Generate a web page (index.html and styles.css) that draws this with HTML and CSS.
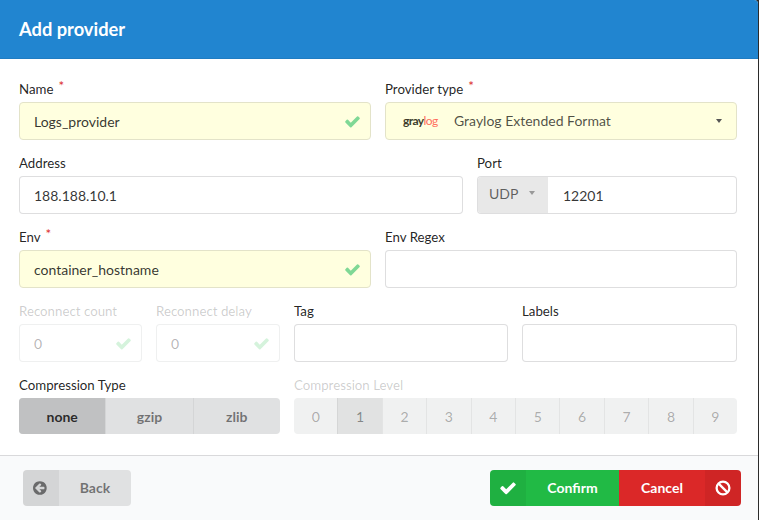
FILE: index.html
```html
<!DOCTYPE html>
<html lang="en">
<head>
  <meta charset="UTF-8" />
  <meta name="viewport" content="width=device-width, initial-scale=1.0"/>
  <title>Add provider</title>
  <link rel="stylesheet" href="styles.css">
</head>
<body>
  <div class="modal">
    <div class="modal-header">Add provider</div>

    <form class="modal-content">
      <div class="row">
        <div class="field half">
          <label class="required">Name</label>
          <div class="box valid">
            <span class="value">Logs_provider</span>
            <svg class="check" viewBox="0 0 1792 1792"><path d="M1671 566q0 40-28 68l-724 724-136 136q-28 28-68 28t-68-28l-136-136-362-362q-28-28-28-68t28-68l136-136q28-28 68-28t68 28l294 295 656-657q28-28 68-28t68 28l136 136q28 28 28 68z"/></svg>
          </div>
        </div>
        <div class="field half">
          <label class="required">Provider type</label>
          <div class="box valid select">
            <span class="logo">gray<em>log</em></span>
            <span class="value">Graylog Extended Format</span>
            <i class="caret"></i>
          </div>
        </div>
      </div>

      <div class="row">
        <div class="field address">
          <label>Address</label>
          <div class="box"><span class="value">188.188.10.1</span></div>
        </div>
        <div class="field port">
          <label>Port</label>
          <div class="box with-addon">
            <span class="addon">UDP<i class="caret light"></i></span>
            <span class="value">12201</span>
          </div>
        </div>
      </div>

      <div class="row">
        <div class="field half">
          <label class="required">Env</label>
          <div class="box valid">
            <span class="value">container_hostname</span>
            <svg class="check" viewBox="0 0 1792 1792"><path d="M1671 566q0 40-28 68l-724 724-136 136q-28 28-68 28t-68-28l-136-136-362-362q-28-28-28-68t28-68l136-136q28-28 68-28t68 28l294 295 656-657q28-28 68-28t68 28l136 136q28 28 28 68z"/></svg>
          </div>
        </div>
        <div class="field half">
          <label>Env Regex</label>
          <div class="box"></div>
        </div>
      </div>

      <div class="row">
        <div class="field reconnect-count disabled">
          <label>Reconnect count</label>
          <div class="box">
            <span class="value">0</span>
            <svg class="check" viewBox="0 0 1792 1792"><path d="M1671 566q0 40-28 68l-724 724-136 136q-28 28-68 28t-68-28l-136-136-362-362q-28-28-28-68t28-68l136-136q28-28 68-28t68 28l294 295 656-657q28-28 68-28t68 28l136 136q28 28 28 68z"/></svg>
          </div>
        </div>
        <div class="field reconnect-delay disabled">
          <label>Reconnect delay</label>
          <div class="box">
            <span class="value">0</span>
            <svg class="check" viewBox="0 0 1792 1792"><path d="M1671 566q0 40-28 68l-724 724-136 136q-28 28-68 28t-68-28l-136-136-362-362q-28-28-28-68t28-68l136-136q28-28 68-28t68 28l294 295 656-657q28-28 68-28t68 28l136 136q28 28 28 68z"/></svg>
          </div>
        </div>
        <div class="field tag">
          <label>Tag</label>
          <div class="box"></div>
        </div>
        <div class="field labels">
          <label>Labels</label>
          <div class="box"></div>
        </div>
      </div>

      <div class="row">
        <div class="field comp-type">
          <label>Compression Type</label>
          <div class="btn-group">
            <span class="active">none</span>
            <span>gzip</span>
            <span>zlib</span>
          </div>
        </div>
        <div class="field comp-level disabled">
          <label>Compression Level</label>
          <div class="btn-group">
            <span>0</span>
            <span class="active">1</span>
            <span>2</span>
            <span>3</span>
            <span>4</span>
            <span>5</span>
            <span>6</span>
            <span>7</span>
            <span>8</span>
            <span>9</span>
          </div>
        </div>
      </div>
    </form>

    <div class="modal-actions">
      <button type="button" class="btn back">
        <span class="btn-icon"><svg viewBox="0 0 1792 1792"><path d="M1280 960v-128q0-26-19-45t-45-19h-502l189-189q19-19 19-45t-19-45l-91-91q-18-18-45-18t-45 18l-362 362-91 91q-18 18-18 45t18 45l91 91 362 362q18 18 45 18t45-18l91-91q18-18 18-45t-18-45l-189-189h502q26 0 45-19t19-45zm256-64q0 209-103 385.5t-279.5 279.5-385.5 103-385.5-103-279.5-279.5-103-385.5 103-385.5 279.5-279.5 385.5-103 385.5 103 279.5 279.5 103 385.5z"/></svg></span>
        <span class="btn-text">Back</span>
      </button>
      <div class="btn-pair">
        <button type="button" class="btn confirm">
          <span class="btn-icon"><svg class="big" viewBox="0 0 1792 1792"><path d="M1671 566q0 40-28 68l-724 724-136 136q-28 28-68 28t-68-28l-136-136-362-362q-28-28-28-68t28-68l136-136q28-28 68-28t68 28l294 295 656-657q28-28 68-28t68 28l136 136q28 28 28 68z"/></svg></span>
          <span class="btn-text">Confirm</span>
        </button>
        <button type="button" class="btn cancel">
          <span class="btn-text">Cancel</span>
          <span class="btn-icon"><svg viewBox="0 0 16 16"><circle cx="8" cy="8" r="6.4" fill="none" stroke="currentColor" stroke-width="2.3"/><path d="M3.6 3.6l8.8 8.8" stroke="currentColor" stroke-width="2.3"/></svg></span>
        </button>
      </div>
    </div>
  </div>
</body>
</html>
```

FILE: styles.css
```css
html, body {
  height: 100%;
}
body {
  margin: 0;
  background: #2b2b2b;
  font-family: Lato, "Open Sans", Arial, sans-serif;
  font-size: 14px;
  color: rgba(0, 0, 0, 0.87);
}
.modal {
  width: 758px;
  height: 520px;
  background: #fff;
  border-top-right-radius: 4px;
  display: flex;
  flex-direction: column;
}
.modal-header {
  height: 59px;
  box-sizing: border-box;
  padding: 0 19px;
  line-height: 58px;
  background: #2185d0;
  border-bottom: 1px solid #1f7cc2;
  border-top-right-radius: 4px;
  color: #fff;
  font-size: 18.3px;
  font-weight: 700;
}
.modal-content {
  padding: 21px 21px 0 19px;
  height: 375px;
  box-sizing: border-box;
}
.row {
  display: flex;
  gap: 14px;
  margin-bottom: 14px;
}
.field label {
  display: block;
  height: 22px;
  line-height: 18px;
  font-size: 13.27px;
  color: rgba(0, 0, 0, 0.87);
}
.required::after {
  content: "*";
  color: #db2828;
  margin-left: 5px;
  position: relative;
  top: -3px;
}
.half { width: 352px; }
.address { width: 444px; }
.port { width: 260px; }
.reconnect-count { width: 123px; }
.reconnect-delay { width: 124px; }
.tag { width: 214px; }
.labels { width: 215px; }
.comp-type { width: 261px; }
.comp-level { width: 443px; }

.box {
  height: 38px;
  box-sizing: border-box;
  display: flex;
  align-items: center;
  padding: 0 14px;
  background: #fff;
  border: 1px solid rgba(34, 36, 38, 0.15);
  border-radius: 4px;
}
.box.valid {
  background: #ffffdf;
  border-color: #e3e3c9;
}
.value {
  flex: 1;
  font-size: 14px;
  color: rgba(0, 0, 0, 0.8);
}
.check {
  width: 17px;
  height: 17px;
  margin-right: -5px;
  fill: #7fd895;
  flex: none;
}
.select .value {
  color: rgba(0, 0, 0, 0.7);
  margin-top: -2px;
}
.logo {
  width: 37px;
  margin: -2px 14px 0 3px;
  font-size: 12px;
  font-weight: 700;
  letter-spacing: -0.6px;
  color: #3d3d2c;
}
.logo em {
  font-style: normal;
  font-weight: 400;
  color: #ff6f5e;
}
.caret {
  width: 0;
  height: 0;
  border-left: 3.5px solid transparent;
  border-right: 3.5px solid transparent;
  border-top: 4px solid #555;
}
.caret.light {
  border-top-color: #999;
  margin-left: 11px;
  margin-top: -1px;
}
.with-addon {
  padding: 0;
  overflow: hidden;
}
.addon {
  width: 71px;
  height: 38px;
  margin-left: -1px;
  flex: none;
  box-sizing: border-box;
  padding: 0 0 3px 12px;
  display: flex;
  align-items: center;
  background: #e8e8e8;
  font-size: 14px;
  color: rgba(0, 0, 0, 0.6);
}
.with-addon .value {
  padding-left: 15px;
}

.disabled label { color: rgba(0, 0, 0, 0.2); }
.disabled .box { border-color: rgba(34, 36, 38, 0.07); }
.disabled .value { color: rgba(0, 0, 0, 0.3); }
.disabled .check { fill: #d5f3dc; }

.btn-group {
  height: 36px;
  display: flex;
  border-radius: 4px;
  overflow: hidden;
  background: #e0e1e2;
}
.btn-group span {
  flex: 1;
  display: flex;
  align-items: center;
  justify-content: center;
  font-size: 14px;
  font-weight: 700;
  color: rgba(0, 0, 0, 0.5);
  border-left: 1px solid rgba(34, 36, 38, 0.06);
}
.btn-group span:first-child { border-left: 0; }
.btn-group .active {
  background: #c0c1c2;
  color: rgba(0, 0, 0, 0.8);
}
.disabled .btn-group { background: #f0f1f1; }
.disabled .btn-group span {
  font-weight: 400;
  color: rgba(0, 0, 0, 0.3);
}
.disabled .btn-group .active {
  background: #e1e2e2;
  color: rgba(0, 0, 0, 0.42);
}

.modal-actions {
  flex: 1;
  display: flex;
  align-items: flex-start;
  justify-content: space-between;
  box-sizing: border-box;
  padding: 14px 17px 0 23px;
  background: #f9fafb;
  border-top: 1px solid rgba(34, 36, 38, 0.15);
  margin-top: 21px;
}
.btn-pair { display: flex; }
.btn {
  height: 36px;
  padding: 0;
  border: 0;
  display: flex;
  font-family: inherit;
  font-size: 14px;
  font-weight: 700;
  cursor: pointer;
  overflow: hidden;
}
.btn-icon {
  width: 36px;
  display: flex;
  align-items: center;
  justify-content: center;
  background: rgba(0, 0, 0, 0.05);
}
.btn-icon svg {
  width: 16px;
  height: 16px;
  fill: currentColor;
}
.btn-icon svg.big {
  width: 18px;
  height: 18px;
}
.btn-text {
  flex: 1;
  line-height: 36px;
  text-align: center;
}
.back {
  width: 108px;
  background: #e0e1e2;
  color: rgba(0, 0, 0, 0.5);
  border-radius: 4px;
}
.confirm {
  width: 129px;
  background: #21ba45;
  color: #fff;
  border-radius: 4px 0 0 4px;
}
.cancel {
  width: 122px;
  background: #db2828;
  color: #fff;
  border-radius: 0 4px 4px 0;
}
```
